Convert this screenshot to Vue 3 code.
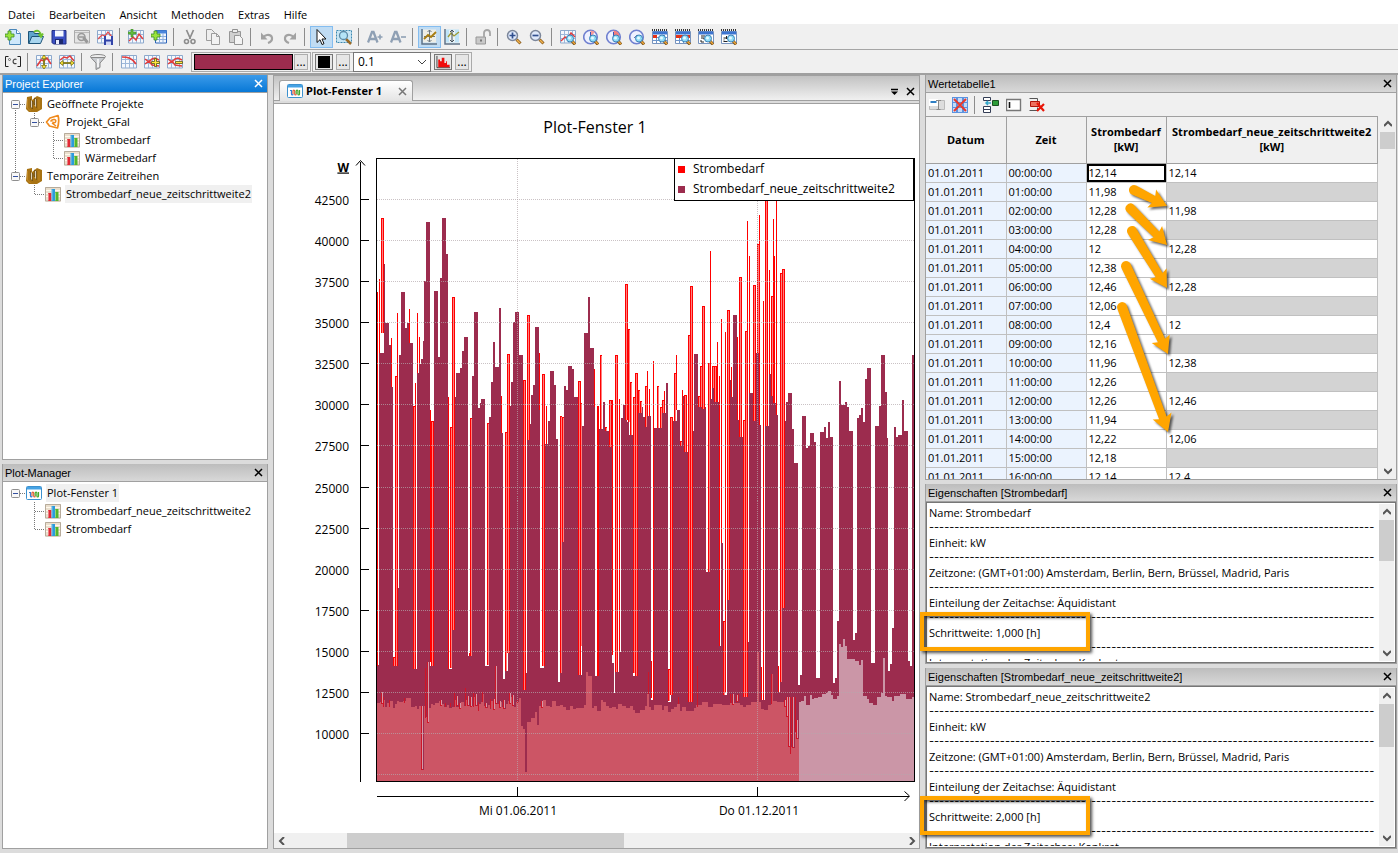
<script setup>
import { ref } from 'vue'

const menus = ['Datei', 'Bearbeiten', 'Ansicht', 'Methoden', 'Extras', 'Hilfe']

const grid = '<path d="M.5 1.500h15v12.500H.5z" fill="#f4f8fd" stroke="#8da9cc"/><path d="M4.500 2v12M8.500 2v12M12.500 2v12M1 5.500h14M1 9.500h14" stroke="#9db8da" fill="none"/>'
const lens = '<path d="M12 12l3 3.500" stroke="#7a5418" stroke-width="3"/><path d="M12 12l3 3" stroke="#f0a63a" stroke-width="1.500"/><circle cx="10" cy="9.500" r="3.500" fill="#8fdcf5" stroke="#3f83b8"/><circle cx="9.500" cy="9" r="1.500" fill="#e6fbff"/>'
const clock = '<circle cx="7.500" cy="8" r="6.800" fill="#eef1ff" stroke="#7080d0" stroke-width="1.600"/>'
const calendar = '<path d="M.5 2.500h15v12H.5z" fill="#fff" stroke="#7793bd"/><path d="M1 2.500h14v3H1z" fill="#3c74d0"/><path d="M0 1h16" stroke="#333" stroke-width="2" stroke-dasharray="1 1"/>'
const calGrid = '<path d="M4.500 6v8M8.500 6v8M12.500 6v8M1 8.500h14M1 11.500h14" stroke="#6c94ca" fill="none"/>'
const plus = '<path d="M3 5v3H0v3h3v3h3v-3h3V8H6V5z" transform="translate(0 -3)" fill="#9be33c" stroke="#3b8c2a" stroke-width=".8"/>'
const glass = '<path d="M10.500 10.500l4 4" stroke="#8a5b1c" stroke-width="3"/><path d="M11 11l3 3" stroke="#f2b44e" stroke-width="1.500"/><circle cx="6.500" cy="6.500" r="5" fill="#dfe9fb" stroke="#7c879b" stroke-width="1.500"/>'

const icons = {
  newDoc: '<path d="M4.500.5h7l4 4v11h-11z" fill="#cfe8fb" stroke="#4b87b9"/><path d="M11.500.5v4h4" fill="#fff" stroke="#4b87b9"/>' + plus,
  open: '<path d="M.5 14.500v-12h5l1 2h6v3" fill="#5fa4cc" stroke="#1d5377"/><path d="M.8 14.500l3-7h11.700l-3 7z" fill="#a8d5ee" stroke="#1d5377"/><path d="M6 3c4-3 7 0 7 4M10.500 5l2.500 3 2-3.500" fill="none" stroke="#6fc22d" stroke-width="1.800"/>',
  save: '<path d="M1 1.500h14V15H2.500L1 13.500z" fill="#3b50c4" stroke="#222f84"/><path d="M4 1.500h8.500v6H4z" fill="#f4f7ff"/><path d="M4 10h8v5H4z" fill="#1e2a6e"/><path d="M5 11h3v4H5z" fill="#e8ecff"/>',
  preview: '<path d="M.5 1.500h15v12.500H.5z" fill="#e4e4e4" stroke="#aaa"/><path d="M1 3.500h14" stroke="#bbb"/><circle cx="7.500" cy="8" r="3.500" fill="#ddd" stroke="#999" stroke-width="1.500"/><path d="M5 8h5l4 5M9 9l4 5" stroke="#999" stroke-width="1.600" fill="none"/>',
  gridSave: grid + '<path d="M1 10l4-4 3 1 3-4 4 5" stroke="#e05050" fill="none" stroke-width="1.300"/><path d="M7 7h9v9H7z" fill="#3345a8"/><path d="M9 7h5v3.500H9z" fill="#f3f6ff"/><path d="M9 12.500h5V16H9z" fill="#cfd6f5"/>',
  gridAdd: grid + '<path d="M1 12l4-4 3 3 3-6 4 5" stroke="#e23c3c" fill="none" stroke-width="1.400"/><path d="M3 0v3H0v2h3v3h2V5h3V3H5V0z" fill="#64ba3e" stroke="#3b8c2a" stroke-width=".6"/>',
  tableAdd: '<path d="M4.500 1.500h11v12.500h-11z" fill="#eff5fd" stroke="#2d64b8"/><path d="M4.500 1.500h11v3h-11z" fill="#4a86dd"/><path d="M8.500 4v10M12 4v10M5 7.500h10M5 10.500h10" stroke="#8caede"/>' + plus,
  cut: '<path d="M4.500 1l4 9M11.500 1l-4 9" stroke="#8d8d8d" stroke-width="1.700"/><circle cx="4.500" cy="12.500" r="2" fill="none" stroke="#8d8d8d" stroke-width="1.600"/><circle cx="11" cy="12.500" r="2" fill="none" stroke="#8d8d8d" stroke-width="1.600"/>',
  copy: '<path d="M1.500.5h5l3 3v8h-8z" fill="#eee" stroke="#9c9c9c"/><path d="M6.500 4.500h5l3 3v8h-8z" fill="#f2f2f2" stroke="#9c9c9c"/><path d="M11.500 4.500v3h3" fill="none" stroke="#9c9c9c"/>',
  paste: '<path d="M1.500 2.500h11v11h-11z" fill="#d0d0d0" stroke="#969696"/><path d="M4.500.5h5v3h-5z" fill="#eee" stroke="#909090"/><path d="M6.500 6.500h5l3 3v6h-8z" fill="#f4f4f4" stroke="#969696"/>',
  undo: '<path d="M9 14c6-2 5-9-1-8-2 .3-3 1.500-4 2.500" fill="none" stroke="#a2a2a2" stroke-width="2.200"/><path d="M2 3.500v7h6.500z" fill="#a2a2a2"/>',
  redo: '<path d="M7 14c-6-2-5-9 1-8 2 .3 3 1.500 4 2.500" fill="none" stroke="#a2a2a2" stroke-width="2.200"/><path d="M14 3.500v7H7.500z" fill="#a2a2a2"/>',
  pointer: '<path d="M4 .5v13l3-2.800 2 4.800 2-.8-2-4.700h4z" fill="#fff" stroke="#111"/>',
  zoomArea: '<path d="M.5 1.500h15v12H.5z" fill="#c7e6f5" stroke="#3c88b0" stroke-dasharray="2 1"/><path d="M10 10l5 5" stroke="#9a6a26" stroke-width="2.500"/><circle cx="7.500" cy="6.500" r="4" fill="#b4e4f7" stroke="#5c8aa6" stroke-width="1.300"/>',
  fontUp: '<path d="M1 13.500L5 3h1.500l4 10.500M3 10h6" fill="none" stroke="#8fa0b4" stroke-width="2.300"/><path d="M10.500 8h5M13 5.500v5" stroke="#8fa0b4" stroke-width="1.600"/>',
  fontDown: '<path d="M1 13.500L5 3h1.500l4 10.500M3 10h6" fill="none" stroke="#8fa0b4" stroke-width="2.300"/><path d="M11 8h5" stroke="#8fa0b4" stroke-width="1.600"/>',
  autoX: '<path d="M1 0v15h15" fill="none" stroke="#5f7388" stroke-width="1.500"/><path d="M2 .5h13v13H2z" fill="#eeeee6"/><path d="M8.500 1v12M6.500 3l2-2 2 2M6.500 11l2 2 2-2M3 7.500h11" stroke="#6c7780" fill="none"/><path d="M3 10l4-4 3 2 5-5" fill="none" stroke="#a87d10" stroke-width="1.800"/>',
  autoY: '<path d="M1 0v15h15" fill="none" stroke="#5f7388" stroke-width="1.500"/><path d="M2 .5h13v13H2z" fill="#bfe4f8"/><path d="M5 1h6v12H5z" fill="#edf2f2"/><path d="M4 8l3-4 3 3 5-4" fill="none" stroke="#9c9a35" stroke-width="1.300"/><path d="M8 1v12M6 3l2-2 2 2M6 11l2 2 2-2" stroke="#46535e" fill="none"/>',
  lock: '<path d="M1 8h9.500v7H1z" fill="#c9c9c9" stroke="#989898"/><path d="M9 8V4c0-4 6-4 6 0v3" fill="none" stroke="#a5a5a5" stroke-width="1.800"/><path d="M5 10.500h2v2H5z" fill="#777"/>',
  zoomIn: glass + '<path d="M3.500 6.500h6M6.500 3.500v6" stroke="#31508f" stroke-width="1.700"/>',
  zoomOut: glass + '<path d="M3.500 6.500h6" stroke="#31508f" stroke-width="1.700"/>',
  zoomChart: grid + '<path d="M1 12l4-4 3 1 3-5 4 4" stroke="#e23c3c" fill="none" stroke-width="1.400"/>' + lens,
  clock1: clock + '<path d="M7.500 8V1.500A6.500 6.500 0 0112 3z" fill="#f59a9a"/><path d="M7.500 3v5.500" stroke="#3a4fb5"/>' + lens,
  clock2: clock + '<path d="M7.500 8V1.500A6.500 6.500 0 0113.500 7z" fill="#f27f7f"/><path d="M7.500 3v5.500" stroke="#3a4fb5"/>' + lens,
  clock3: clock + '<path d="M5 9l3-3 3 2" stroke="#6570b0" fill="none"/>' + lens,
  cal1: calendar + calGrid + '<path d="M1 6h4v3H1z" fill="#e63216"/>' + lens,
  cal2: calendar + calGrid + '<path d="M1 6h14v3H1z" fill="#e63216"/>' + lens,
  cal3: calendar + '<path d="M3 13h3M3 11v2M3 9h3v1.500M3 7h4" stroke="#222" fill="none"/>' + lens,
  cal4: calendar + '<path d="M2.500 12.500h4M3 10.500v1M2.500 9h4M5.500 7v3" stroke="#222" fill="none"/>' + lens,
  celsius: '<path d="M3.500 2.500h-3v10h3M12.500 2.500h3v10h-3" fill="none" stroke="#222"/><circle cx="4.500" cy="5.500" r="1" fill="none" stroke="#555" stroke-width=".8"/><path d="M11.500 5.500c-4-2-5 5.500 0 4" fill="none" stroke="#444" stroke-width="1.200"/>',
  fitY: grid + '<path d="M1 12l4-6 3 1 3-3 4 6" stroke="#e23c3c" fill="none" stroke-width="1.500"/><path d="M8 1L5.500 4.500h2v7h-2L8 15l2.500-3.500h-2v-7h2z" fill="#ffe93b" stroke="#74690c" stroke-width=".8"/>',
  fitX: grid + '<path d="M1 6l4-3 3 1 3-2 4 5" stroke="#e23c3c" fill="none" stroke-width="1.500"/><path d="M.8 9L4 6.500v2h8v-2L15.200 9 12 11.500v-2H4v2z" fill="#ffe93b" stroke="#74690c" stroke-width=".8"/>',
  filter: '<ellipse cx="8" cy="2.500" rx="7.500" ry="2" fill="#eee" stroke="#888"/><path d="M.8 3.500L6 9v6.500l4-2V9l5-5.500z" fill="#c9ccd0" stroke="#888"/><path d="M8 5v8" stroke="#fff" stroke-width="1.500"/>',
  decline: grid + '<path d="M1 3c6 0 10 1 14 7" stroke="#e23c3c" fill="none" stroke-width="1.600"/>',
  curveAdd: grid + '<path d="M1 5l4 3 3-3 3-1 4 2M1 10l4-3 3 4 7 1" stroke="#e23c3c" fill="none" stroke-width="1.500"/><path d="M10.500 4.500h2v3h3v2h-3v3h-2v-3h-3v-2h3z" fill="#ffe93b" stroke="#5e5716" stroke-width=".8"/>',
  curveSub: grid + '<path d="M1 5l4 3 3-3 3-1 4 2M1 10l4-3 3 4 7 1" stroke="#e23c3c" fill="none" stroke-width="1.500"/><path d="M8.500 7.500h7v2h-7z" fill="#ffe93b" stroke="#5e5716" stroke-width=".8"/>',
  histogram: '<path d="M.5 1v13.500h15" fill="none" stroke="#333"/><path d="M2 14V5h2v2h2V3h3v6h2V7h1v4h3v3z" fill="#f00d0d"/>',
  columns: '<path d="M0 1h16v14.500H0z" fill="#eadfcd"/><path d="M.5 1.500h15v13.500H.5z" fill="none" stroke="#b7ab9b"/><path d="M1 4.500h14M1 7.500h14M1 10.500h14" stroke="#fff8ec"/><path d="M3 7h3.500v8H3z" fill="#e22b35"/><path d="M6.500 3H10v12H6.500z" fill="#2b9bdc"/><path d="M10 6h3.500v9H10z" fill="#54b62c"/><path d="M3.500 7.500v7M7 3.500v11M10.500 6.500v8" stroke="#ffffff66"/>',
  plot: '<rect x=".5" y="1.500" width="15" height="13" rx="1" fill="#fff" stroke="#3b91cf"/><path d="M1 2h14v2.500H1z" fill="#45a2e4"/><path d="M3 7.500h1.500V11c0 1.300 1.500 1.300 1.500 0" fill="none" stroke="#317fd4" stroke-width="1.200"/><path d="M6 11V8c0-1.300 1.700-1.300 1.700 0v3c0 1.300 1.500 1.300 1.500 0" fill="none" stroke="#e2603c" stroke-width="1.200"/><path d="M9.200 11V8c0-1.300 1.700-1.300 1.700 0v3c0 1.300 1.600 1.300 1.600 0V7" fill="none" stroke="#46a82c" stroke-width="1.200"/>',
  books: '<path d="M1 1l5-1v4l5-4 5 2v11l-5 3H3l-3-3z" fill="#a87313"/><path d="M4.500 3v8l2 2V5l2 4V2l2 1v9" fill="#ddd2bd" stroke="#6e4a09" stroke-width=".8"/><path d="M1.500 3v9l3 3M13 3v10" stroke="#c98f2b" fill="none" stroke-width=".8"/>',
  gfai: '<path d="M13 1.500c1 3 .8 8-.5 12.500L4.500 12 1.500 8 5 4z" fill="#fff" stroke="#f08a1c" stroke-width="1.700" stroke-linejoin="round"/><path d="M5.500 7.500C8 4 12 5.500 10.500 8c-1 1.500-3 .5-2.500-.5M7 9l4 3" fill="none" stroke="#f08a1c" stroke-width="1.500"/>',
  rename: '<path d="M.5 3.500h15v9H.5z" fill="#ddd" stroke="#bbb"/><path d="M0 2h9v7H0z" fill="#fff"/><path d="M1.500 4h6v2h-6z" fill="#2f7fc4"/><path d="M7 3.500h5M9.500 3.500v9M7.500 12.500h4" stroke="#888"/>',
  deleteGrid: '<path d="M0 0h16v16H0z" fill="#5c92df"/><path d="M1 1h3v4H1zM6 1h4v4H6zM12 1h3v4h-3zM1 6h3v4H1zM6 6h4v4H6zM12 6h3v4h-3zM1 11h3v4H1zM6 11h4v4H6zM12 11h3v4h-3z" fill="#c3dbf8"/><path d="M2 2l12 12M14 2L2 14" stroke="#e8392c" stroke-width="2"/>',
  insertCol: '<path d="M.5.5h7v3h-7zM.5 9.500h7v3h-7zM.5 12.500h7v3h-7z" fill="#fff" stroke="#333d55"/><path d="M9.500 3.500h6v5h-6z" fill="#2c9c37" stroke="#1b4f22"/><path d="M8 6H3M5 4L3 6l2 2" stroke="#35a6c9" fill="none" stroke-width="1.500"/>',
  insertCell: '<path d="M.5 2.500h14v11H.5z" fill="#fff" stroke="#777" stroke-width="1.400"/><path d="M3.500 5v6" stroke="#111" stroke-width="1.600"/>',
  deleteRow: '<path d="M.5 1.500h8v3M.5 13.500h8v-3" fill="none" stroke="#555"/><path d="M1.500 4.500h9v5h-9z" fill="#ee715f" stroke="#b1140a"/><path d="M8 6l7 8M15 7l-7 7" stroke="#e81507" stroke-width="2.200"/>'
}

const mainTools = [
  ['newDoc', 'open', 'save', 'preview', 'gridSave'],
  ['gridAdd', 'tableAdd'],
  ['cut', 'copy', 'paste'],
  ['undo', 'redo'],
  ['pointer', 'zoomArea'],
  ['fontUp', 'fontDown'],
  ['autoX', 'autoY'],
  ['lock'],
  ['zoomIn', 'zoomOut'],
  ['zoomChart', 'clock1', 'clock2', 'clock3', 'cal1', 'cal2', 'cal3', 'cal4']
]
const activeTools = ['pointer', 'autoX']
const plotTools = [['celsius'], ['fitY', 'fitX'], ['filter'], ['decline', 'curveAdd', 'curveSub']]
const tableTools = [['rename', 'deleteGrid'], ['insertCol', 'insertCell', 'deleteRow']]
const lineWidth = ref('0.1')

/* Guide cells: each is a path on a 19 x 18 cell; box marks an expander. */
const V = { d: 'M9.500 0V18' }
const TEE = { d: 'M9.500 0V18M10 9.500H19' }
const ELBOW = { d: 'M9.500 0V9M10 9.500H19' }
const EMPTY = { d: '' }
const explorer = [
  { cells: [{ d: 'M9.500 9V18M10 9.500H19', box: true }], icon: 'books', label: 'Geöffnete Projekte' },
  { cells: [V, { d: 'M9.500 0V9M10 9.500H19', box: true }], icon: 'gfai', label: 'Projekt_GFal' },
  { cells: [V, EMPTY, TEE], icon: 'columns', label: 'Strombedarf' },
  { cells: [V, EMPTY, ELBOW], icon: 'columns', label: 'Wärmebedarf' },
  { cells: [{ d: 'M9.500 0V9M10 9.500H19', box: true }], icon: 'books', label: 'Temporäre Zeitreihen' },
  { cells: [EMPTY, ELBOW], icon: 'columns', label: 'Strombedarf_neue_zeitschrittweite2', selected: true }
]
const plots = [
  { cells: [{ d: 'M10 9.500H19', box: true }], icon: 'plot', label: 'Plot-Fenster 1', selected: true },
  { cells: [EMPTY, TEE], icon: 'columns', label: 'Strombedarf_neue_zeitschrittweite2' },
  { cells: [EMPTY, ELBOW], icon: 'columns', label: 'Strombedarf' }
]
const sidePanels = [
  { title: 'Project Explorer', rows: explorer, active: true },
  { title: 'Plot-Manager', rows: plots, active: false }
]

const power = ['12,14', '11,98', '12,28', '12,28', '12', '12,38', '12,46', '12,06', '12,4', '12,16', '11,96', '12,26', '12,26', '11,94', '12,22', '12,18', '12,14']
const resampled = ['12,14', '11,98', '12,28', '12,28', '12', '12,38', '12,46', '12,06', '12,4']
const tableRows = power.map((value, i) => ({
  time: String(i).padStart(2, '0') + ':00:00',
  value,
  coarse: i % 2 ? '' : resampled[i / 2]
}))

const dashes = '-'.repeat(88)
const properties = [
  { name: 'Strombedarf', step: '1,000', size: 'size-a' },
  { name: 'Strombedarf_neue_zeitschrittweite2', step: '2,000', size: 'size-b' }
].map(p => ({
  ...p,
  lines: ['Name: ' + p.name, dashes, 'Einheit: kW', dashes, 'Zeitzone: (GMT+01:00) Amsterdam, Berlin, Bern, Brüssel, Madrid, Paris', dashes, 'Einteilung der Zeitachse: Äquidistant', dashes, 'Schrittweite: ' + p.step + ' [h]', dashes, 'Interpretation der Zeitachse: Konkret']
}))

/* Pointers from each hourly value to its place in the coarser series. */
function arrow([x1, y1, x2, y2]) {
  const len = Math.hypot(x2 - x1, y2 - y1)
  const ux = (x2 - x1) / len
  const uy = (y2 - y1) / len
  const at = (back, side) => `${(x2 - ux * back - uy * side).toFixed(1)} ${(y2 - uy * back + ux * side).toFixed(1)}`
  return `M${at(len, -5)}L${at(15, -4)}L${at(17, -10)}L${at(0, 0)}L${at(17, 10)}L${at(15, 4)}L${at(len, 5)}A5 5 0 0 1 ${at(len, -5)}Z`
}
const arrows = [
  [208, 115, 241, 131],
  [204, 133, 241, 170],
  [206, 156, 241, 213],
  [200, 191, 242, 279],
  [196, 232, 242, 357]
].map(arrow)

/* Plot data: step series as x, y pairs in drawing units. */
const top = [377, 665, 379, 353, 384, 264, 385, 323, 389, 345, 391, 387, 393, 666, 398, 588, 399, 355, 401, 292, 405, 328, 407, 323, 410, 343, 413, 669, 417, 373, 419, 364, 421, 359, 423, 341, 424, 281, 426, 222, 430, 666, 434, 291, 438, 357, 440, 278, 442, 218, 446, 254, 448, 669, 452, 630, 455, 397, 456, 373, 460, 368, 462, 351, 464, 337, 468, 656, 472, 376, 474, 312, 478, 408, 480, 403, 481, 399, 485, 666, 489, 417, 491, 382, 493, 342, 495, 367, 499, 308, 501, 433, 503, 679, 505, 671, 508, 653, 509, 406, 511, 382, 513, 322, 515, 312, 519, 355, 523, 690, 525, 673, 527, 440, 530, 424, 531, 395, 533, 385, 535, 327, 539, 353, 540, 668, 544, 444, 548, 421, 550, 371, 554, 385, 556, 439, 558, 682, 560, 673, 562, 542, 564, 386, 566, 390, 568, 366, 572, 369, 574, 397, 578, 675, 582, 426, 584, 333, 588, 297, 590, 348, 594, 406, 595, 676, 599, 429, 603, 402, 605, 431, 609, 447, 612, 663, 614, 693, 615, 672, 619, 652, 621, 418, 623, 405, 627, 422, 629, 435, 633, 676, 637, 413, 641, 407, 643, 417, 645, 427, 647, 416, 651, 700, 654, 428, 662, 413, 666, 383, 668, 702, 671, 627, 673, 421, 677, 410, 680, 441, 682, 396, 684, 452, 688, 702, 692, 431, 694, 354, 698, 397, 700, 407, 706, 572, 710, 399, 712, 388, 716, 402, 719, 646, 721, 543, 723, 695, 727, 600, 729, 380, 731, 397, 733, 315, 737, 420, 740, 437, 743, 697, 747, 642, 749, 393, 753, 421, 756, 353, 759, 425, 761, 700, 765, 426, 769, 374, 771, 396, 773, 403, 776, 415, 778, 692, 780, 682, 782, 608, 784, 421, 786, 402, 788, 393, 792, 429, 794, 463, 798, 685, 800, 675, 802, 416, 806, 448, 808, 446, 810, 433, 814, 442, 816, 678, 820, 432, 824, 427, 826, 438, 828, 422, 830, 437, 833, 683, 835, 678, 837, 621, 839, 381, 841, 405, 845, 402, 847, 407, 849, 431, 853, 640, 855, 633, 857, 418, 859, 415, 861, 408, 863, 422, 865, 379, 867, 368, 871, 663, 875, 426, 879, 406, 881, 355, 885, 392, 887, 438, 888, 671, 890, 664, 892, 628, 894, 427, 896, 437, 898, 435, 902, 400, 904, 431, 908, 661, 910, 666, 912, 355]
const low = [377, 703, 380, 702, 381, 694, 383, 700, 385, 707, 387, 703, 390, 701, 393, 708, 395, 704, 397, 701, 399, 702, 403, 701, 406, 698, 411, 707, 415, 706, 417, 709, 419, 706, 421, 770, 424, 706, 425, 717, 427, 723, 429, 708, 431, 704, 433, 705, 435, 703, 439, 701, 442, 704, 444, 707, 447, 705, 449, 708, 452, 707, 454, 700, 456, 707, 459, 709, 461, 702, 464, 706, 466, 700, 468, 706, 470, 702, 472, 706, 474, 697, 476, 706, 478, 711, 479, 704, 481, 702, 482, 694, 484, 706, 486, 708, 488, 705, 490, 709, 491, 701, 493, 710, 495, 666, 497, 704, 499, 702, 502, 707, 504, 709, 506, 704, 508, 701, 510, 697, 512, 703, 514, 707, 516, 702, 519, 698, 521, 726, 523, 729, 525, 772, 527, 722, 531, 718, 535, 712, 537, 725, 539, 706, 543, 700, 546, 706, 550, 707, 552, 701, 556, 706, 560, 705, 563, 707, 566, 710, 570, 706, 573, 709, 576, 708, 584, 705, 586, 672, 588, 676, 592, 708, 594, 706, 597, 711, 601, 700, 603, 702, 606, 706, 609, 708, 612, 707, 616, 709, 618, 704, 622, 706, 626, 708, 630, 706, 633, 710, 635, 713, 640, 710, 645, 706, 647, 694, 649, 707, 651, 710, 654, 705, 662, 710, 664, 706, 668, 712, 671, 709, 674, 707, 677, 704, 680, 711, 682, 707, 686, 711, 694, 708, 696, 705, 702, 702, 708, 707, 713, 704, 722, 705, 730, 703, 740, 705, 743, 707, 746, 705, 751, 702, 757, 652, 759, 702, 761, 709, 764, 710, 768, 705, 771, 674, 773, 701, 777, 702, 784, 700, 786, 706, 787, 717, 789, 747, 792, 748, 795, 732, 797, 739]
const tail = [799, 702, 801, 701, 804, 696, 806, 705, 810, 695, 812, 699, 814, 698, 818, 697, 822, 694, 826, 693, 828, 691, 831, 695, 833, 699, 837, 696, 839, 644, 841, 647, 843, 639, 845, 646, 847, 659, 855, 661, 859, 665, 861, 660, 863, 696, 867, 699, 869, 703, 873, 705, 877, 697, 881, 693, 883, 658, 885, 696, 887, 697, 892, 701, 894, 696, 900, 694, 906, 699, 912, 697]

function steps(data, end) {
  let d = `M${data[0]} 782`
  for (let i = 0; i < data.length; i += 2) d += `H${data[i]}V${data[i + 1]}`
  return d + `H${end}V782Z`
}
const topPath = steps(top, 914)
const lowPath = steps(low, 799)
const tailPath = steps(tail, 914)

/* Hourly peaks: x, width, top, bottom. */
const peaks = [
  [377, 1, 292, 666], [379, 1, 279, 353], [381, 3, 218, 333], [391, 1, 338, 387], [393, 2, 657, 666], [395, 3, 376, 666], [397, 1, 313, 376], [409, 1, 309, 343], [413, 2, 406, 669], [415, 1, 383, 669], [417, 1, 313, 373], [419, 1, 337, 364],
  [430, 1, 410, 662], [431, 3, 421, 666], [448, 1, 397, 669], [450, 2, 427, 668], [452, 3, 297, 630], [469, 2, 653, 656], [470, 2, 418, 656], [487, 2, 423, 665], [501, 1, 396, 433], [505, 2, 432, 671], [507, 3, 354, 653], [523, 3, 380, 690], [527, 3, 315, 440], [539, 1, 353, 410], [542, 3, 374, 666], [546, 1, 406, 444],
  [560, 2, 416, 673], [562, 2, 417, 542], [578, 3, 381, 675], [580, 2, 403, 646], [594, 1, 369, 407], [597, 2, 406, 676], [600, 2, 355, 429], [598, 1, 407, 676], [605, 2, 427, 431], [609, 3, 400, 447], [612, 1, 400, 655], [615, 3, 355, 672], [619, 1, 399, 652], [625, 3, 284, 420], [628, 2, 329, 422], [630, 2, 382, 435], [633, 2, 397, 673], [635, 3, 373, 676], [638, 2, 390, 413], [640, 2, 401, 413],
  [645, 2, 386, 427], [647, 1, 371, 416], [649, 1, 389, 416], [651, 1, 661, 698], [653, 1, 361, 700], [657, 2, 386, 428], [660, 2, 407, 428], [662, 2, 400, 413], [664, 1, 391, 413], [668, 2, 669, 701], [670, 3, 417, 695], [674, 2, 373, 421], [676, 1, 355, 410], [680, 2, 441, 446], [682, 1, 390, 440], [684, 3, 395, 452], [688, 2, 335, 702], [690, 3, 286, 702], [698, 2, 396, 407], [700, 2, 366, 407], [702, 3, 306, 409], [708, 2, 363, 572], [710, 1, 251, 399],
  [712, 2, 366, 388], [714, 3, 366, 402], [717, 1, 342, 402], [719, 1, 376, 646], [721, 1, 319, 543], [723, 2, 621, 695], [725, 1, 332, 692], [727, 3, 310, 600], [731, 1, 367, 397], [737, 1, 337, 420], [739, 3, 277, 437], [743, 2, 420, 697], [745, 3, 331, 697], [747, 1, 221, 640], [749, 1, 256, 393], [753, 3, 285, 421], [757, 3, 244, 353], [759, 1, 215, 425], [761, 1, 667, 700], [763, 1, 301, 700], [765, 3, 190, 426], [769, 1, 270, 374], [771, 2, 296, 396], [773, 1, 219, 403], [774, 1, 256, 403], [776, 1, 190, 415], [778, 1, 666, 692], [780, 2, 273, 682], [782, 3, 269, 608]
]
/* Excursions of the hourly minimum. */
const dips = [
  [381, 2, 692, 704], [383, 1, 697, 707], [389, 1, 700, 707], [404, 1, 698, 703], [421, 2, 706, 770], [425, 1, 668, 718], [427, 2, 662, 723], [440, 2, 700, 706], [445, 1, 703, 707], [450, 1, 703, 707], [454, 1, 693, 707], [456, 2, 696, 706], [459, 2, 703, 709], [465, 1, 688, 706], [467, 2, 696, 706], [470, 2, 697, 707], [473, 1, 693, 707], [475, 2, 694, 706], [478, 1, 702, 711], [482, 1, 692, 702], [485, 2, 703, 708], [490, 1, 699, 708], [493, 2, 699, 710], [495, 2, 666, 704], [499, 2, 701, 708], [503, 2, 700, 709], [509, 2, 693, 704], [512, 2, 695, 706], [517, 1, 700, 704],
  [541, 2, 701, 708], [648, 1, 672, 694], [678, 1, 697, 704], [697, 1, 666, 707], [730, 1, 694, 703], [732, 2, 694, 705], [736, 2, 695, 702], [738, 1, 694, 701], [771, 1, 674, 704], [784, 2, 700, 707], [786, 2, 697, 717], [788, 2, 697, 747], [790, 1, 697, 754], [792, 2, 697, 748], [795, 1, 697, 732], [796, 2, 720, 739]
]
const yTicks = Array.from({ length: 14 }, (_, i) => ({ label: String(42500 - i * 2500), y: 199.5 + i * 41 + (i > 6 ? 1 : 0) }))
</script>

<template>
  <div class="app">
    <nav class="menu" aria-label="Menü">
      <button v-for="m in menus" :key="m" type="button">{{ m }}</button>
    </nav>

    <div class="toolbar">
      <div v-for="(group, g) in mainTools" :key="g" class="group">
        <button v-for="name in group" :key="name" type="button" class="tool" :class="{ on: activeTools.includes(name) }" :aria-label="name">
          <svg viewBox="0 0 16 16" fill="none" v-html="icons[name]" />
        </button>
      </div>
    </div>
    <div class="toolbar second">
      <div v-for="(group, g) in plotTools" :key="g" class="group">
        <button v-for="name in group" :key="name" type="button" class="tool" :aria-label="name">
          <svg viewBox="0 0 16 16" fill="none" v-html="icons[name]" />
        </button>
      </div>
      <div class="style-box">
        <span class="line-colour" />
        <button type="button" class="more" aria-label="Linienfarbe">...</button>
      </div>
      <div class="style-box">
        <button type="button" class="fill-colour" aria-label="Füllfarbe"><span /></button>
        <button type="button" class="more" aria-label="Füllfarbe wählen">...</button>
        <div class="combo">
          <select v-model="lineWidth" aria-label="Linienbreite"><option>0.1</option><option>0.5</option><option>1.0</option></select>
          <svg viewBox="0 0 10 6"><path d="M1 1l4 4 4-4" fill="none" stroke="#444" /></svg>
        </div>
        <button type="button" class="fill-colour" aria-label="Diagrammtyp"><svg viewBox="0 0 16 16" fill="none" v-html="icons.histogram" /></button>
        <button type="button" class="more" aria-label="Diagrammtyp wählen">...</button>
      </div>
    </div>

    <main class="workspace">
      <div class="column left">
        <section v-for="panel in sidePanels" :key="panel.title" class="panel">
          <header class="caption" :class="{ active: panel.active }">
            <h2>{{ panel.title }}</h2>
            <button type="button" class="close" aria-label="Schließen"><svg viewBox="0 0 9 9"><path d="M1 1l7 7M8 1L1 8" /></svg></button>
          </header>
          <ul class="tree">
            <li v-for="row in panel.rows" :key="row.label">
              <svg v-for="(cell, c) in row.cells" :key="c" class="guide" viewBox="0 0 19 18" fill="none">
                <path :d="cell.d" stroke="#777" stroke-dasharray="1 1" />
                <g v-if="cell.box">
                  <rect x="5.500" y="5.500" width="8" height="8" rx="1" fill="#f8f8f8" stroke="#8f8f8f" />
                  <path d="M7 9.500h5" stroke="#3450a0" />
                </g>
              </svg>
              <svg class="node" viewBox="0 0 16 16" fill="none" v-html="icons[row.icon]" />
              <span class="label" :class="{ selected: row.selected }">{{ row.label }}</span>
            </li>
          </ul>
        </section>
      </div>

      <section class="document">
        <div class="tabs">
          <div class="tab">
            <svg class="node" viewBox="0 0 16 16" fill="none" v-html="icons.plot" />
            <strong>Plot-Fenster 1</strong>
            <button type="button" class="close soft" aria-label="Tab schließen"><svg viewBox="0 0 9 9"><path d="M1 1l7 7M8 1L1 8" /></svg></button>
          </div>
          <button type="button" class="close push" aria-label="Fensterliste"><svg viewBox="0 0 9 9"><path d="M1 2.500h7" /><path d="M1 4.500h7L4.500 8z" fill="#000" stroke="none" /></svg></button>
          <button type="button" class="close" aria-label="Schließen"><svg viewBox="0 0 9 9"><path d="M1 1l7 7M8 1L1 8" /></svg></button>
        </div>
        <svg class="chart" viewBox="274 105 645 728" role="img" aria-label="Plot-Fenster 1">
          <text x="595" y="133" class="title" text-anchor="middle">Plot-Fenster 1</text>
          <g shape-rendering="crispEdges">
            <path :d="topPath" fill="#9c2c4e" />
            <path :d="lowPath" fill="#cc5565" />
            <path :d="tailPath" fill="#cb96a7" />
            <g v-for="([x, w, y1, y2], i) in peaks" :key="'p' + i">
              <rect :x="x" :y="y1" :width="w" :height="y2 - y1" fill="#ff0000" />
              <rect v-if="w > 1" :x="x + 1" :y="y1 + 1" :width="1" :height="y2 - y1 - 1" fill="#ff8080" />
            </g>
            <g v-for="([x, w, y1, y2], i) in dips" :key="'d' + i">
              <rect :x="x" :y="y1" :width="w" :height="y2 - y1" fill="#ce1528" />
              <rect v-if="w > 1" :x="x + 1" :y="y1" width="1" :height="y2 - y1 - 1" fill="#d69aa8" />
            </g>
            <g fill="none" stroke="#b4a8ac" stroke-opacity=".7" stroke-dasharray="1 1">
              <path v-for="t in yTicks" :key="t.label" :d="`M377 ${t.y}H914`" />
              <path d="M377 774.500H914M517.500 159V781M757.500 159V781" />
            </g>
            <path d="M376.500 158.500H914.500V781.500H376.500Z" fill="none" stroke="#000" />
            <path d="M674.500 158.500H913.500V200.500H674.500Z" fill="#fff" stroke="#000" />
            <path d="M678 166h7v7h-7z" fill="#f00" />
            <path d="M678 186h7v7h-7z" fill="#9c2c4e" />
            <path d="M360.500 162V782M377 796.500H909M517.500 787v9M757.500 787v9" fill="none" stroke="#000" />
            <path v-for="t in yTicks" :key="t.label" :d="`M361 ${t.y}h8`" stroke="#000" />
          </g>
          <path d="M356 166l4.500-5 4.500 5M904.500 792l5 4.500-5 5" fill="none" stroke="#000" />
          <text x="693" y="173">Strombedarf</text>
          <text x="693" y="193">Strombedarf_neue_zeitschrittweite2</text>
          <text x="349" y="172" text-anchor="end" class="unit">W</text>
          <text v-for="t in yTicks" :key="t.label" x="349" :y="t.y + 6" text-anchor="end">{{ t.label }}</text>
          <text x="518" y="815" text-anchor="middle">Mi 01.06.2011</text>
          <text x="759" y="815" text-anchor="middle">Do 01.12.2011</text>
        </svg>
        <div class="scroll-h">
          <button type="button" aria-label="Nach links"><svg viewBox="0 0 8 8"><path d="M6 0L2 4l4 4" /></svg></button>
          <div class="track"><div class="thumb" /></div>
          <button type="button" aria-label="Nach rechts"><svg viewBox="0 0 8 8"><path d="M2 0l4 4-4 4" /></svg></button>
        </div>
      </section>

      <div class="column right">
        <section class="panel values">
          <header class="caption">
            <h2>Wertetabelle1</h2>
            <button type="button" class="close" aria-label="Schließen"><svg viewBox="0 0 9 9"><path d="M1 1l7 7M8 1L1 8" /></svg></button>
          </header>
          <div class="toolbar inner">
            <div v-for="(group, g) in tableTools" :key="g" class="group">
              <button v-for="name in group" :key="name" type="button" class="tool" :aria-label="name">
                <svg viewBox="0 0 16 16" fill="none" v-html="icons[name]" />
              </button>
            </div>
          </div>
          <div class="table-area">
            <div class="table-clip">
              <table>
                <thead>
                  <tr><th class="narrow">Datum</th><th class="narrow">Zeit</th><th class="narrow">Strombedarf<br>[kW]</th><th>Strombedarf_neue_zeitschrittweite2<br>[kW]</th></tr>
                </thead>
                <tbody>
                  <tr v-for="(row, i) in tableRows" :key="row.time">
                    <td class="key">01.01.2011</td>
                    <td class="key">{{ row.time }}</td>
                    <td :class="{ current: i === 0 }">{{ row.value }}</td>
                    <td :class="{ blank: !row.coarse }">{{ row.coarse }}</td>
                  </tr>
                </tbody>
              </table>
            </div>
            <div class="scroll-v">
              <button type="button" aria-label="Nach oben"><svg viewBox="0 0 8 8"><path d="M0 6l4-4 4 4" /></svg></button>
              <div class="track"><div class="thumb thumb-t" /></div>
              <button type="button" aria-label="Nach unten"><svg viewBox="0 0 8 8"><path d="M0 2l4 4 4-4" /></svg></button>
            </div>
          </div>
          <svg class="arrows" width="260" height="380" viewBox="0 0 260 380" aria-hidden="true">
            <path v-for="d in arrows" :key="d" :d="d" />
          </svg>
        </section>

        <section v-for="p in properties" :key="p.name" class="panel props" :class="p.size">
          <header class="caption">
            <h2>Eigenschaften [{{ p.name }}]</h2>
            <button type="button" class="close" aria-label="Schließen"><svg viewBox="0 0 9 9"><path d="M1 1l7 7M8 1L1 8" /></svg></button>
          </header>
          <div class="sheet">
            <div class="text">
              <p v-for="(line, i) in p.lines" :key="i" :class="{ rule: i % 2 }">{{ line }}</p>
            </div>
            <div class="scroll-v">
              <button type="button" aria-label="Nach oben"><svg viewBox="0 0 8 8"><path d="M0 6l4-4 4 4" /></svg></button>
              <div class="track"><div class="thumb" /></div>
              <button type="button" aria-label="Nach unten"><svg viewBox="0 0 8 8"><path d="M0 2l4 4 4-4" /></svg></button>
            </div>
          </div>
          <div class="mark" />
        </section>
      </div>
    </main>
  </div>
</template>

<style>
body {
  margin: 0;
  background: #dcdcdc;
}
</style>

<style scoped>
.app {
  box-sizing: border-box;
  display: flex;
  flex-direction: column;
  height: 100vh;
  min-height: 600px;
  overflow: hidden;
  background: #dcdcdc;
  color: #000;
  font: 12px/18px "Open Sans", "Noto Sans", sans-serif;
}
button {
  display: flex;
  align-items: center;
  justify-content: center;
  margin: 0;
  padding: 0;
  border: 0;
  background: none;
  color: inherit;
  font: inherit;
}
.menu {
  display: flex;
  gap: 14px;
  height: 18px;
  padding: 6px 8px 0;
  background: #fff;
  font-size: 11px;
}
.toolbar {
  box-sizing: border-box;
  display: flex;
  flex: none;
  align-items: center;
  height: 26px;
  padding: 0 2px;
  border-bottom: 1px solid #a5a5a5;
  background: #f0f0f0;
}
.toolbar.second {
  height: 25px;
  border-bottom: 2px solid #a0a0a0;
}
.group {
  display: flex;
  align-items: center;
}
.group + .group::before {
  width: 1px;
  height: 18px;
  margin: 0 5px 0 2px;
  background: #8c8c8c;
  content: "";
}
.tool {
  box-sizing: border-box;
  justify-content: flex-start;
  width: 23px;
  height: 22px;
  padding-left: 3px;
}
.tool svg,
.node {
  flex: none;
  width: 16px;
  height: 16px;
}
.tool.on {
  padding-left: 2px;
  border: 1px solid #84bdf0;
  background: #c0dcf3;
}
.style-box {
  box-sizing: border-box;
  display: flex;
  align-items: center;
  gap: 1px;
  height: 20px;
  margin-left: 4px;
  padding: 0 2px;
  border: 1px solid #aaa;
}
.style-box + .style-box {
  gap: 3px;
  margin-left: 1px;
}
.line-colour {
  box-sizing: border-box;
  width: 99px;
  height: 16px;
  border: 1px solid #000;
  background: #9c2c4e;
}
.more,
.fill-colour {
  box-sizing: border-box;
  width: 14px;
  height: 16px;
  border: 1px solid #adadad;
  background: #e6e6e6;
  line-height: 10px;
}
.fill-colour {
  width: 18px;
  border-color: #777;
}
.fill-colour span {
  width: 12px;
  height: 12px;
  background: #000;
}
.fill-colour svg {
  width: 15px;
  height: 14px;
}
.combo {
  position: relative;
  display: flex;
}
.combo select {
  width: 78px;
  height: 20px;
  padding: 0 4px;
  border: 1px solid #777;
  border-radius: 0;
  appearance: none;
  background: #fff;
  color: #000;
  font: inherit;
  line-height: 18px;
}
.combo svg {
  position: absolute;
  top: 7px;
  right: 4px;
  width: 10px;
  height: 6px;
}

.workspace {
  display: flex;
  flex: 1;
  gap: 5px;
  min-height: 0;
  padding: 0 1px 4px 2px;
}
.column {
  display: flex;
  flex-direction: column;
  gap: 4px;
}
.left {
  flex: 0 0 266px;
}
.right {
  flex: 0 0 472px;
}
.panel {
  position: relative;
  box-sizing: border-box;
  display: flex;
  flex: 1 1 385px;
  flex-direction: column;
  min-height: 0;
  border: 1px solid #a0a0a0;
  border-top: 0;
  background: #fff;
}
.caption {
  display: flex;
  flex: none;
  align-items: center;
  justify-content: space-between;
  height: 17px;
  padding: 0 4px 0 2px;
  border-bottom: 1px solid #a0a0a0;
  background: linear-gradient(#bdbdbd, #d8d8d8);
}
.caption.active {
  background: linear-gradient(#3c9bea, #0878d6);
  color: #fff;
}
.caption h2 {
  margin: 0;
  font: 11px/16px "Liberation Sans", Arial, sans-serif;
}
.close svg {
  width: 9px;
  height: 9px;
  fill: none;
  stroke: #000;
  stroke-width: 1.500;
}
.caption.active .close svg {
  stroke: #fff;
}
.close.soft svg {
  stroke: #777;
}
.tree {
  margin: 0;
  padding: 2px 3px;
  list-style: none;
}
.tree li {
  display: flex;
  align-items: center;
  height: 18px;
}
.guide {
  flex: none;
  width: 19px;
  height: 18px;
}
.tree .node {
  margin-left: 1px;
}
.label {
  margin-left: 4px;
  padding: 0 1px;
  font-size: 11px;
  white-space: nowrap;
}
.label.selected {
  background: #f0f0f0;
}

.document {
  box-sizing: border-box;
  display: flex;
  flex: 1;
  flex-direction: column;
  min-width: 0;
  border: 1px solid #a0a0a0;
  background: #fff;
}
.tabs {
  box-sizing: border-box;
  display: flex;
  flex: none;
  align-items: flex-end;
  gap: 7px;
  height: 28px;
  padding: 0 4px 2px 5px;
  border-bottom: 1px solid #a0a0a0;
  background: linear-gradient(#c2c2c2, #f0f0f0 24px, #a0a0a0 24px, #a0a0a0 25px, #dcdcdc 25px);
}
.tab {
  box-sizing: border-box;
  display: flex;
  align-items: center;
  width: 134px;
  height: 21px;
  padding: 0 5px 0 7px;
  border: 1px solid #a0a0a0;
  border-bottom: 0;
  border-radius: 3px 3px 0 0;
  background: linear-gradient(#fff, #e4e4e4);
}
.tab strong {
  flex: 1;
  margin-left: 3px;
  font-size: 11px;
  white-space: nowrap;
}
.tabs > .close {
  height: 20px;
}
.push {
  margin-left: auto;
}
.chart {
  flex: 1;
  width: 100%;
  min-height: 0;
}
.chart text {
  font: 12px "Open Sans", "Noto Sans", sans-serif;
}
.chart .title {
  font-size: 16px;
}
.chart .unit {
  font-weight: 700;
  text-decoration: underline;
}

.scroll-h,
.scroll-v {
  display: flex;
  flex: none;
  background: #f0f0f0;
}
.scroll-h {
  height: 15px;
}
.scroll-v {
  flex-direction: column;
  width: 15px;
}
.scroll-h button,
.scroll-v button {
  width: 15px;
  height: 16px;
}
.scroll-h svg,
.scroll-v svg {
  width: 8px;
  height: 8px;
  fill: none;
  stroke: #555;
  stroke-width: 2;
}
.track {
  display: flex;
  flex: 1;
  min-height: 0;
}
.thumb {
  width: 100%;
  height: 41px;
  background: #cdcdcd;
}
.size-b .thumb {
  height: 43px;
}
.scroll-h .thumb {
  width: 45%;
  height: 100%;
  margin-left: 9.500%;
}
.thumb.thumb-t {
  height: 17px;
}

.values {
  flex-basis: 405px;
  background: #f0f0f0;
}
.toolbar.inner {
  height: 23px;
  padding: 0;
  border: 0;
}
.table-area {
  display: flex;
  flex: 1;
  gap: 2px;
  min-height: 0;
  padding-right: 1px;
}
.table-clip {
  flex: 1;
  overflow: hidden;
}
table {
  width: 100%;
  border-collapse: collapse;
  border-top: 1px solid #a0a0a0;
  background: #fff;
  font-size: 11px;
  table-layout: fixed;
}
th {
  box-sizing: border-box;
  height: 47px;
  padding: 0 0 2px;
  border-right: 1px solid #a0a0a0;
  border-bottom: 1px solid #a0a0a0;
  background: #f0f0f0;
  line-height: 15px;
}
.narrow {
  width: 80px;
}
td {
  box-sizing: border-box;
  height: 19px;
  padding: 0 2px;
  border-right: 1px solid #c0c0c0;
  border-bottom: 1px solid #c0c0c0;
  line-height: 18px;
}
.key {
  background: #ebf3fe;
}
.blank {
  background: #d3d3d3;
}
.current {
  box-shadow: inset 0 0 0 2px #000;
}
.arrows {
  position: absolute;
  top: 0;
  left: 0;
  overflow: visible;
  fill: #ffa500;
  filter: drop-shadow(2px 2px 1px #00000099);
}
.size-a {
  flex-basis: 180px;
}
.size-b {
  flex-basis: 181px;
}
.sheet {
  display: flex;
  flex: 1;
  min-height: 0;
  padding: 1px 1px 1px 2px;
  border: 1px solid #777;
}
.text {
  flex: 1;
  overflow: hidden;
  padding-top: 1px;
}
.text p {
  height: 15px;
  margin: 0;
  font-size: 11px;
  line-height: 15px;
  white-space: nowrap;
}
.text .rule {
  font-family: Inter, sans-serif;
}
.mark {
  position: absolute;
  top: 128px;
  left: -6px;
  box-sizing: border-box;
  width: 170px;
  height: 39px;
  border: 4px solid #ffa500;
  box-shadow: 2px 2px 3px #000000b0, inset 2px 2px 3px #000000b0;
}
</style>
